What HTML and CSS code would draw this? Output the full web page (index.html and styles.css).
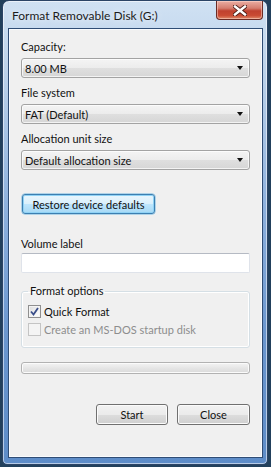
FILE: index.html
```html
<!DOCTYPE html>
<html lang="en">
<head>
    <meta charset="UTF-8">
    <meta name="viewport" content="width=device-width, initial-scale=1.0">
    <title>Format Removable Disk (G:)</title>
    <link rel="stylesheet" href="styles.css">
</head>
<body>
    <div class="window">
        <div class="titlebar">
            <span class="title">Format Removable Disk (G:)</span>
            <div class="close-btn">
                <svg width="14" height="11" viewBox="0 0 14 11">
                    <path d="M2 1.5 L12 9.5 M12 1.5 L2 9.5" stroke="#4a1a14" stroke-width="4.2" stroke-linecap="square"/>
                    <path d="M2 1.5 L12 9.5 M12 1.5 L2 9.5" stroke="#ffffff" stroke-width="2.4" stroke-linecap="square"/>
                </svg>
            </div>
        </div>

        <div class="client">
            <div class="field">
                <label>Capacity:</label>
                <div class="combo"><span>8.00 MB</span><span class="arrow"></span></div>
            </div>
            <div class="field">
                <label>File system</label>
                <div class="combo"><span>FAT (Default)</span><span class="arrow"></span></div>
            </div>
            <div class="field">
                <label>Allocation unit size</label>
                <div class="combo"><span>Default allocation size</span><span class="arrow"></span></div>
            </div>

            <button class="btn restore-btn">Restore device defaults</button>

            <div class="field volume">
                <label>Volume label</label>
                <div class="textbox"></div>
            </div>

            <fieldset class="group">
                <legend>Format options</legend>
                <div class="check">
                    <span class="box">
                        <svg width="9" height="9" viewBox="0 0 9 9">
                            <path d="M1 4.5 L3.5 7.5 L8 1" fill="none" stroke="#3b4f8a" stroke-width="1.8"/>
                        </svg>
                    </span>
                    Quick Format
                </div>
                <div class="check disabled">
                    <span class="box"></span>
                    Create an MS-DOS startup disk
                </div>
            </fieldset>

            <div class="progress"></div>

            <div class="actions">
                <button class="btn">Start</button>
                <button class="btn">Close</button>
            </div>
        </div>
    </div>
</body>
</html>
```

FILE: styles.css
```css
body {
    margin: 0;
    padding: 0;
    background-color: #22405c;
    font-family: Lato, "Open Sans", sans-serif;
    font-size: 11px;
    color: #111;
}

.window {
    margin-left: 2px;
    width: 266px;
    height: 465px;
    box-sizing: border-box;
    border: 1px solid #2b4466;
    border-radius: 7px 7px 5px 5px;
    padding: 0 5px 6px 6px;
    background: linear-gradient(to bottom, #d0e1f3 0, #bcd2ea 70px, #8fb2de 200px, #6b97cf 330px, #5d8cc8 465px);
    box-shadow: inset 0 0 0 1px rgba(255, 255, 255, 0.55);
}

.titlebar {
    height: 28px;
    display: flex;
    justify-content: space-between;
    align-items: flex-start;
}

.title {
    margin-top: 7px;
    margin-left: 3px;
    font-size: 12px;
    color: #1c1c1c;
    text-shadow: 0 0 6px rgba(255, 255, 255, 0.9);
}

.close-btn {
    width: 45px;
    height: 18px;
    margin-right: -1px;
    border: 1px solid #6a2b25;
    border-top: none;
    border-radius: 0 0 4px 4px;
    background: linear-gradient(to bottom, #ebaea3 0, #d57d6f 40%, #c0412f 55%, #c94a33 80%, #e08a6a 100%);
    box-shadow: inset 0 0 0 1px rgba(255, 220, 210, 0.5);
    display: flex;
    justify-content: center;
    align-items: center;
}

.client {
    height: 428px;
    box-sizing: border-box;
    background-color: #f0f0f0;
    border: 1px solid #f9fbfe;
    box-shadow: 0 0 0 1px #2f4d75;
    padding: 9px 11px 0 11px;
}

.field {
    margin-bottom: 7px;
}

.field label {
    display: block;
    line-height: 15px;
    margin-bottom: 4px;
}

.combo {
    height: 20px;
    box-sizing: border-box;
    border: 1px solid #a3a3a3;
    border-radius: 3px;
    background: linear-gradient(to bottom, #f4f4f4 0, #ececec 50%, #dfdfdf 51%, #d6d6d6 100%);
    box-shadow: inset 0 0 0 1px rgba(255, 255, 255, 0.7);
    display: flex;
    justify-content: space-between;
    align-items: center;
    padding: 0 6px 0 3px;
}

.arrow {
    width: 0;
    height: 0;
    border-left: 3.5px solid transparent;
    border-right: 3.5px solid transparent;
    border-top: 4px solid #111;
}

.btn {
    font-family: Lato, "Open Sans", sans-serif;
    font-size: 11px;
    color: #111;
    height: 21px;
    border: 1px solid #707070;
    border-radius: 3px;
    background: linear-gradient(to bottom, #f2f2f2 0, #ebebeb 50%, #dddddd 51%, #cfcfcf 100%);
    box-shadow: inset 0 0 0 1px #fbfbfb;
    padding: 0;
}

.restore-btn {
    display: block;
    margin: 24px 0 0 1px;
    width: 133px;
    height: 20px;
    border-color: #3c7fb1;
    background: linear-gradient(to bottom, #eaf6fd 0, #d9f0fc 50%, #bee6fd 51%, #a7d9f5 100%);
    box-shadow: inset 0 0 0 1px #8fd2f5, 0 0 0 0.5px #6fb5e0;
}

.volume {
    margin-top: 22px;
}

.volume label {
    margin-bottom: 2px;
}

.textbox {
    height: 20px;
    box-sizing: border-box;
    background-color: #fff;
    border: 1px solid #dfe3ea;
    border-top-color: #b5bac3;
    border-radius: 2px;
}

.group {
    margin: 10px 0 0 0;
    padding: 0 6px 10px 6px;
    border: 1px solid #d5dfe5;
    border-radius: 3px;
    box-shadow: inset 0 0 0 1px #fff;
}

.group legend {
    padding: 0 2px 2px 2px;
    line-height: 15px;
}

.check {
    display: flex;
    align-items: center;
    gap: 3px;
    line-height: 15px;
    margin-top: 4px;
}

.check + .check {
    margin-top: 3px;
}

.box {
    width: 13px;
    height: 13px;
    box-sizing: border-box;
    border: 1px solid #8f8f8f;
    background: linear-gradient(135deg, #dcdcdc 0, #f7f7f7 70%, #ffffff 100%);
    box-shadow: inset 0 0 0 1px #f4f4f4;
    display: flex;
    justify-content: center;
    align-items: center;
}

.check.disabled {
    color: #8d8d8d;
}

.check.disabled .box {
    border-color: #c4c4c4;
    background: #f4f4f4;
}

.progress {
    margin-top: 14px;
    height: 12px;
    box-sizing: border-box;
    border: 1px solid #b2b2b2;
    border-radius: 3px;
    background: linear-gradient(to bottom, #f4f4f4 0, #e6e6e6 50%, #dadada 100%);
    box-shadow: inset 0 0 0 1px #fbfbfb;
}

.actions {
    margin-top: 30px;
    display: flex;
    justify-content: flex-end;
    gap: 9px;
}

.actions .btn {
    width: 72px;
}

.actions .btn:last-child {
    width: 73px;
}
```
